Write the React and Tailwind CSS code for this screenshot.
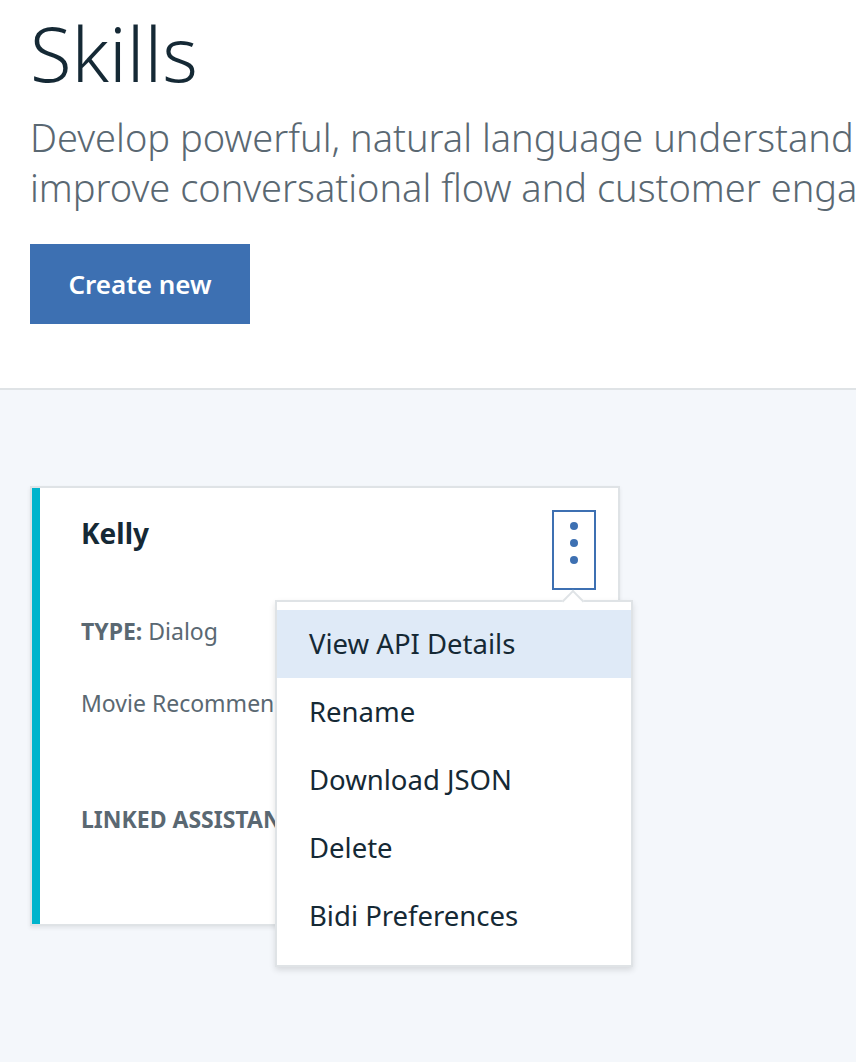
import React from "react";

const menuItems = [
  "View API Details",
  "Rename",
  "Download JSON",
  "Delete",
  "Bidi Preferences",
];

const SkillCard = () => {
  return (
    <div className="relative w-[590px] h-[440px] bg-white border-2 border-[#dfe3e6] shadow-[0_2px_4px_rgba(0,0,0,0.08)] flex">
      {/* Barre de couleur */}
      <div className="w-[8px] bg-[#00b4cc] flex-shrink-0" />

      <div className="flex-1 min-w-0 pl-[41px] pr-[22px] pt-[22px] overflow-hidden">
        <div className="flex justify-between items-start">
          <h3 className="text-[28px] font-bold text-[#152935] mt-[3px] leading-[40px]">
            Kelly
          </h3>
          <button className="w-[44px] h-[80px] border-2 border-[#3d70b2] flex flex-col items-center pt-[10px] gap-[9px]">
            <span className="w-[8px] h-[8px] rounded-full bg-[#3d70b2]" />
            <span className="w-[8px] h-[8px] rounded-full bg-[#3d70b2]" />
            <span className="w-[8px] h-[8px] rounded-full bg-[#3d70b2]" />
          </button>
        </div>

        <p className="mt-[26px] text-[23px] text-[#5a6872] whitespace-nowrap leading-[30px]">
          <span className="font-bold">TYPE:</span> Dialog
        </p>
        <p className="mt-[42px] text-[23px] text-[#5a6872] whitespace-nowrap leading-[30px]">
          Movie Recommendations
        </p>
        <p className="mt-[86px] text-[23px] font-bold text-[#5a6872] whitespace-nowrap leading-[30px]">
          LINKED ASSISTANTS
        </p>
      </div>

      {/* Menu overflow */}
      <div className="absolute left-[243px] top-[112px] w-[358px] bg-white border-2 border-[#dfe3e6] shadow-[0_3px_6px_rgba(0,0,0,0.12)] pt-[8px] pb-[15px] z-10">
        <div className="absolute -top-[9px] left-[288px] w-[16px] h-[16px] bg-white border-l-2 border-t-2 border-[#dfe3e6] rotate-45" />
        {menuItems.map((item, i) => (
          <div
            key={item}
            className={`relative h-[68px] flex items-center pl-[32px] text-[27.5px] text-[#152935] ${
              i === 0 ? "bg-[#dfeaf7]" : ""
            }`}
          >
            {item}
          </div>
        ))}
      </div>
    </div>
  );
};

export default function App() {
  return (
    <div
      className="w-[856px] h-[1062px] overflow-hidden bg-[#f4f7fb]"
      style={{ fontFamily: '"Noto Sans", "Open Sans", sans-serif' }}
    >
      <div className="bg-white border-b-2 border-[#dfe3e6] pl-[30px] pt-[8px] pb-[64px] h-[390px]">
        <h1 className="text-[76px] font-light text-[#152935] leading-[90px]">
          Skills
        </h1>
        <p className="mt-[14px] text-[38px] font-light text-[#5a6872] leading-[50px] whitespace-nowrap">
          Develop powerful, natural language understanding skills to
          <br />
          improve conversational flow and customer engagement.
        </p>
        <button className="mt-[32px] w-[220px] h-[80px] bg-[#3d70b2] text-white text-[26px] font-semibold">
          Create new
        </button>
      </div>

      <div className="pl-[30px] pt-[96px]">
        <SkillCard />
      </div>
    </div>
  );
}
